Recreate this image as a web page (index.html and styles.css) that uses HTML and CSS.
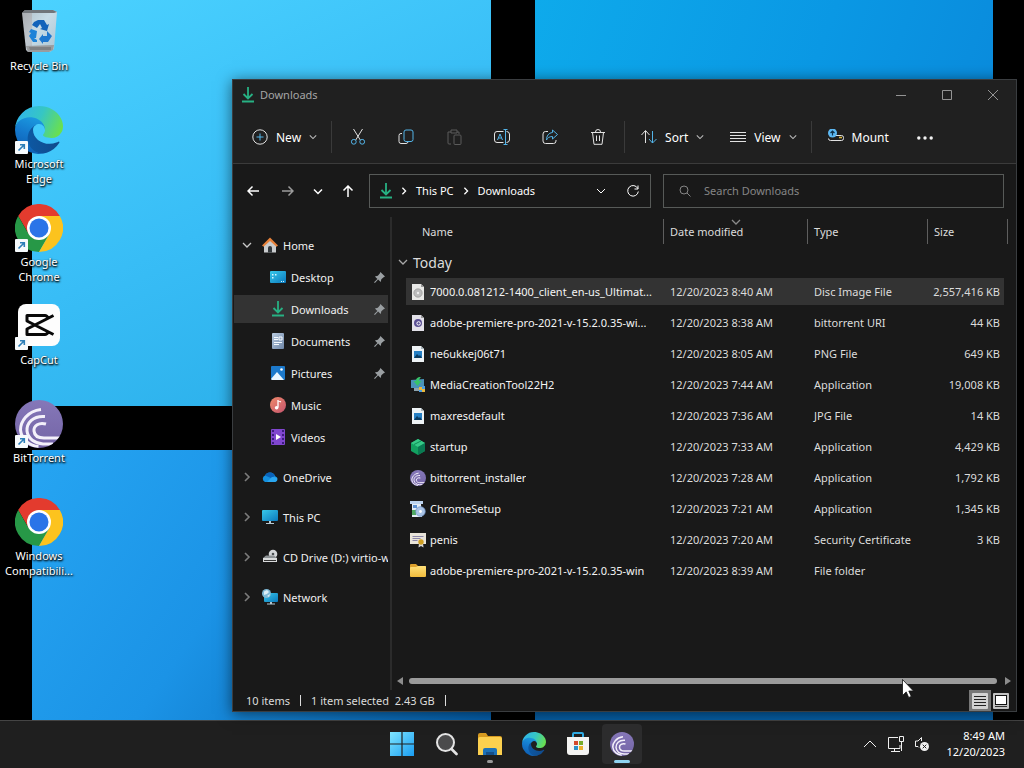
FILE: index.html
```html
<!DOCTYPE html>
<html lang="en">

<head>
  <meta charset="UTF-8">
  <meta name="viewport" content="width=device-width, initial-scale=1">
  <title>Downloads</title>
  <link rel="stylesheet" href="styles.css">
</head>

<body>
  <!-- shared icons -->
  <svg class="sprite" aria-hidden="true">
    <defs>
      <linearGradient id="edgeA" x1="0" y1="0.5" x2="1" y2="0.5"><stop offset="0" stop-color="#0c59a4"/><stop offset="1" stop-color="#114a8b"/></linearGradient>
      <linearGradient id="edgeB" x1="0.6" y1="0" x2="0.3" y2="1"><stop offset="0" stop-color="#1b9de2"/><stop offset="0.5" stop-color="#1478cc"/><stop offset="1" stop-color="#0d5cb0"/></linearGradient>
      <linearGradient id="edgeC" x1="0" y1="0.3" x2="1" y2="0.6"><stop offset="0" stop-color="#2fb4ec"/><stop offset="0.5" stop-color="#36c6c4"/><stop offset="1" stop-color="#6be04c"/></linearGradient>
      <linearGradient id="bin" x1="0" y1="0" x2="1" y2="1"><stop offset="0" stop-color="#b9bdc2"/><stop offset="0.45" stop-color="#d5dde4"/><stop offset="1" stop-color="#b4c3cf"/></linearGradient>
      <linearGradient id="bt" x1="0" y1="0" x2="0" y2="1"><stop offset="0" stop-color="#8577b8"/><stop offset="1" stop-color="#7465a6"/></linearGradient>
      <linearGradient id="screen" x1="0" y1="0" x2="1" y2="1"><stop offset="0" stop-color="#38c8ea"/><stop offset="1" stop-color="#0b79bd"/></linearGradient>
      <linearGradient id="folder" x1="0" y1="0" x2="0" y2="1"><stop offset="0" stop-color="#ffe07a"/><stop offset="1" stop-color="#f2bc3c"/></linearGradient>
      <linearGradient id="win" x1="0" y1="0" x2="1" y2="1"><stop offset="0" stop-color="#7fe6ff"/><stop offset="1" stop-color="#1a9df2"/></linearGradient>
      <linearGradient id="paper" x1="0" y1="0" x2="1" y2="1"><stop offset="0" stop-color="#b9cbe0"/><stop offset="1" stop-color="#6f87a8"/></linearGradient>
      <linearGradient id="tune" x1="0" y1="0" x2="1" y2="1"><stop offset="0" stop-color="#f08a6a"/><stop offset="1" stop-color="#c4546e"/></linearGradient>
      <clipPath id="disc"><circle cx="24" cy="24" r="24"/></clipPath>
    </defs>

    <symbol id="i-bin" viewBox="0 0 48 48">
      <path d="M7 5 10 2h28l4 2-3 37-4 3H13l-2-2z" fill="url(#bin)" fill-opacity=".9"/>
      <path d="M7 5 10 2h28l4 2-3 1z" fill="#70757a"/>
      <path d="m11 38 28-1-1 5-4 2H13z" fill="#9a9c9e"/>
      <path d="M14 39h22v3H15z" fill="#7f8183"/>
      <path d="m19 14 4-2h6l3 5 2-1-2 7-7-2 2-1-2-4-3 4-5-3z" fill="#1263ba"/>
      <path d="m16 21 6 2-1 7h-2l3 2v2h-4l-4-6 2-3-2-1z" fill="#1d83d8"/>
      <path d="m32 23 5 5-4 6h-5v2l-4-5 4-5v2h4z" fill="#1e78cf"/>
    </symbol>
    <symbol id="i-edge" viewBox="0 0 256 256">
      <g transform="translate(-4.63 -4.92)">
        <path d="M235.68 195.46a93.73 93.73 0 0 1-10.54 4.71 101.87 101.87 0 0 1-35.9 6.46c-47.32 0-88.54-32.55-88.54-74.32A31.48 31.48 0 0 1 117.13 105c-42.8 1.8-53.8 46.4-53.8 72.53 0 73.88 68.09 81.37 82.76 81.37 7.91 0 19.84-2.3 27-4.56l1.31-.44a128.34 128.34 0 0 0 66.6-52.8 4 4 0 0 0-5.32-5.64z" fill="url(#edgeA)"/>
        <path d="M110.34 246.34A79.2 79.2 0 0 1 87.6 225a80.72 80.72 0 0 1 29.53-120c3.12-1.47 8.45-4.13 15.54-4a32.35 32.35 0 0 1 25.69 13 31.88 31.88 0 0 1 6.36 18.66c0-.21 24.46-79.6-80-79.6-43.9 0-80 41.66-80 78.21a130.15 130.15 0 0 0 12.11 56 128 128 0 0 0 156.38 67.11 75.55 75.55 0 0 1-62.78-8z" fill="url(#edgeB)"/>
        <path d="M156.94 153.78c-.81 1.05-3.3 2.5-3.3 5.66 0 2.61 1.7 5.12 4.72 7.23 14.38 10 41.49 8.68 41.56 8.68a59.56 59.56 0 0 0 30.27-8.35 61.38 61.38 0 0 0 30.43-52.88c.26-22.41-8-37.31-11.34-43.91C228.09 28.76 182.35 4.92 132.61 4.92a128 128 0 0 0-128 126.2c.48-36.54 36.8-66.05 80-66.05 3.5 0 23.46.34 42 10.07 16.34 8.58 24.9 18.94 30.85 29.21 6.18 10.67 7.28 24.15 7.28 29.52s-2.74 13.33-7.8 19.91z" fill="url(#edgeC)"/>
      </g>
    </symbol>
    <symbol id="i-chrome" viewBox="0 0 48 48">
      <path d="M44.8 12A24 24 0 0 0 3.2 12l10.4 18L24 12z" fill="#e33b2e"/>
      <path d="M3.2 12A24 24 0 0 0 24 48l10.4-18H13.6z" fill="#279847"/>
      <path d="M24 48a24 24 0 0 0 20.8-36H24l10.4 18z" fill="#fcc31e"/>
      <circle cx="24" cy="24" r="12" fill="#fff"/>
      <circle cx="24" cy="24" r="9.5" fill="#2a74e8"/>
    </symbol>
    <symbol id="i-capcut" viewBox="0 0 48 48">
      <rect x="3" y="2" width="42" height="42" rx="8" fill="#fdfdfd"/>
      <path d="M38.500 13.500 12 27v5.500h18q2 0 3.500-3M38.500 32.500 12 19v-5.500h18q2 0 3.500 3" fill="none" stroke="#080808" stroke-width="3" stroke-linejoin="round"/>
    </symbol>
    <symbol id="i-bt" viewBox="0 0 48 48">
      <circle cx="24" cy="24" r="24" fill="url(#bt)"/>
      <g clip-path="url(#disc)" fill="none" stroke="#f3f0fa" stroke-width="3">
        <path d="M26 9.500C12 11 5.500 22 5.500 30c1 10 10 16 18 16.500"/>
        <path d="M30 16.500C18 15.500 11.500 23 12 31c1 8 8 12.500 16 13h10"/>
        <path d="M31 24c-7-2-12.500 1.500-12 7 .5 5 5 7 10 7h17"/>
      </g>
    </symbol>
    <symbol id="i-shortcut" viewBox="0 0 13 13">
      <rect width="13" height="13" rx="1" fill="#f6fafc"/>
      <path d="M3.500 9.500 9 4M5 3.700h4.300V8" fill="none" stroke="#2d7fb8" stroke-width="1.600"/>
    </symbol>
    <symbol id="i-download" viewBox="0 0 12 16">
      <path d="M6 0v11M1.500 7 6 11.500 10.500 7" fill="none" stroke="#27b183" stroke-width="1.800"/>
      <path d="M0 14.500h12" stroke="#27b183" stroke-width="2"/>
    </symbol>
    <symbol id="i-down" viewBox="0 0 10 10"><path d="m1 3 4 4 4-4" fill="none" stroke="currentColor" stroke-width="1.300"/></symbol>
    <symbol id="i-right" viewBox="0 0 10 10"><path d="m3 1 4 4-4 4" fill="none" stroke="currentColor" stroke-width="1.600"/></symbol>
    <symbol id="i-pin" viewBox="0 0 12 12">
      <path d="m7 0 5 5-1.500.8L8 8l-.7 3L4.500 8.200 1 12l-1-.7 3.700-3.600L1 4.900l3.200-.7L6.300 1.500z" fill="#9a9fa2"/>
    </symbol>
    <symbol id="i-image" viewBox="0 0 16 16">
      <path d="M2 0h9l3 3v13H2z" fill="#eef3f5"/><path d="M11 0v3h3z" fill="#aab5bb"/>
      <path d="M4 5h8v7H4z" fill="#2780c4"/><path d="m4 12 3-4 2 2 1-1 2 3z" fill="#0b3d63"/>
    </symbol>
    <symbol id="i-folder" viewBox="0 0 16 16">
      <path d="M0 2q0-1 1-1h5l2 2h7q1 0 1 1v3H0z" fill="#dca02c"/>
      <path d="M0 5q0-1 1-1h5l2-1h7q1 0 1 1v9q0 1-1 1H1q-1 0-1-1z" fill="url(#folder)"/>
    </symbol>
    <symbol id="i-pc" viewBox="0 0 16 16">
      <rect y="1" width="16" height="11" rx="1" fill="url(#screen)"/>
      <path d="M7 12h2v2h3v1H4v-1h3z" fill="#b5c8d2"/>
    </symbol>
  </svg>

  <main class="desktop">
    <div class="wallpaper" aria-hidden="true">
      <div class="pane pane-1"></div>
      <div class="pane pane-2"></div>
      <div class="pane pane-3"></div>
      <div class="pane pane-4"></div>
    </div>

    <nav class="shortcuts" aria-label="Desktop">
      <a href="#" class="shortcut">
        <span class="shortcut-icon"><svg><use href="#i-bin"/></svg></span>
        Recycle Bin
      </a>
      <a href="#" class="shortcut">
        <span class="shortcut-icon"><svg><use href="#i-edge"/></svg><svg class="badge"><use href="#i-shortcut"/></svg></span>
        Microsoft Edge
      </a>
      <a href="#" class="shortcut">
        <span class="shortcut-icon"><svg><use href="#i-chrome"/></svg><svg class="badge"><use href="#i-shortcut"/></svg></span>
        Google Chrome
      </a>
      <a href="#" class="shortcut">
        <span class="shortcut-icon"><svg><use href="#i-capcut"/></svg><svg class="badge"><use href="#i-shortcut"/></svg></span>
        CapCut
      </a>
      <a href="#" class="shortcut">
        <span class="shortcut-icon"><svg><use href="#i-bt"/></svg><svg class="badge"><use href="#i-shortcut"/></svg></span>
        BitTorrent
      </a>
      <a href="#" class="shortcut">
        <span class="shortcut-icon"><svg><use href="#i-chrome"/></svg></span>
        Windows Compatibili...
      </a>
    </nav>

    <section class="window" aria-label="File Explorer">
      <header class="titlebar">
        <svg class="title-icon"><use href="#i-download"/></svg>
        <h1>Downloads</h1>
        <button type="button" class="win-btn" aria-label="Minimize"><svg viewBox="0 0 12 12"><path d="M1 6.500h10"/></svg></button>
        <button type="button" class="win-btn" aria-label="Maximize"><svg viewBox="0 0 12 12"><path d="M1.500 1.500h9v9h-9z"/></svg></button>
        <button type="button" class="win-btn" aria-label="Close"><svg viewBox="0 0 12 12"><path d="m1 1 10 10M11 1 1 11"/></svg></button>
      </header>

      <div class="toolbar">
        <button type="button" class="tool">
          <svg class="ico" viewBox="0 0 16 16"><circle cx="8" cy="8" r="7.200" class="w"/><path class="b" d="M8 4.500v7M4.500 8h7"/></svg>
          New
          <svg class="chev"><use href="#i-down"/></svg>
        </button>
        <span class="sep"></span>
        <button type="button" class="tool-icon" aria-label="Cut"><svg class="ico" viewBox="0 0 16 16"><path class="w" d="m3.500 0 6.800 11M12.500 0 5.700 11"/><circle class="b" cx="3.800" cy="12.800" r="2.400"/><circle class="b" cx="12.200" cy="12.800" r="2.400"/></svg></button>
        <button type="button" class="tool-icon" aria-label="Copy"><svg class="ico" viewBox="0 0 16 16"><path class="w" d="M4 4.500H3a2 2 0 0 0-2 2v6a2 2 0 0 0 2 2h5a2 2 0 0 0 2-1.500"/><rect class="b" x="6" y="1" width="9" height="11.500" rx="2"/></svg></button>
        <button type="button" class="tool-icon" aria-label="Paste" disabled><svg class="ico" viewBox="0 0 16 16"><path class="w" d="M5 15H3a1 1 0 0 1-1-1V3h3M11 3h2v2M5 1h6v3H5z"/><rect class="w" x="8" y="6" width="7" height="9.500" rx="1"/></svg></button>
        <button type="button" class="tool-icon" aria-label="Rename"><svg class="ico" viewBox="0 0 16 16"><path class="w" d="M9.500 2.500H3a2.500 2.500 0 0 0-2.500 2.500v6A2.500 2.500 0 0 0 3 13.500h6.500M12.500 2.500a3 3 0 0 1 3 2.500v6a3 3 0 0 1-3 2.500"/><path class="b" d="M3.500 11 6 5l2.500 6M4.300 9h3.400M11.500 .5v15M9.500.5h4M9.500 15.500h4"/></svg></button>
        <button type="button" class="tool-icon" aria-label="Share"><svg class="ico" viewBox="0 0 16 16"><path class="w" d="M6 2.500H3.500a2.500 2.500 0 0 0-2.500 2.500v7a2.500 2.500 0 0 0 2.500 2.500h8a2.500 2.500 0 0 0 2.500-2.500V11"/><path class="b" d="m10.500 1 5 4.500-5 4.500V7.500C7 7.500 5.500 9 4.500 11c0-4 2-7 6-7.500z"/></svg></button>
        <button type="button" class="tool-icon" aria-label="Delete"><svg class="ico" viewBox="0 0 16 16"><path class="w" d="M1 3.500h14M5.500 3a2.500 2.500 0 0 1 5 0M2.500 3.500 4 15.300h8l1.500-11.800M6.500 6.500v5.500M9.500 6.500v5.500"/></svg></button>
        <span class="sep"></span>
        <button type="button" class="tool">
          <svg class="ico" viewBox="0 0 16 16"><path class="w" d="M4.500 14V2M0.500 6l4-4.500L8.500 6"/><path class="b" d="M11.500 2v12M8 10l3.500 4 4-4"/></svg>
          Sort
          <svg class="chev"><use href="#i-down"/></svg>
        </button>
        <button type="button" class="tool">
          <svg class="ico" viewBox="0 0 16 16"><path class="w" d="M0 3.500h16M0 6.500h16M0 9.500h16M0 12.500h16"/></svg>
          View
          <svg class="chev"><use href="#i-down"/></svg>
        </button>
        <span class="sep"></span>
        <button type="button" class="tool">
          <svg class="ico" viewBox="0 0 16 16"><path class="w" d="M8 6.500h5.500a2 2 0 0 1 2 2v1a2 2 0 0 1-2 2h-11a2 2 0 0 1-2-2"/><path d="M11 8.500h3" stroke="#d9b53a" stroke-width="1.500"/><circle cx="4.500" cy="4" r="4.500" fill="#5cb8f2"/><path d="M4.500 6.500V2M2.500 4l2-2 2 2" fill="none" stroke="#10324a" stroke-width="1.200"/></svg>
          Mount
        </button>
        <button type="button" class="tool-icon" aria-label="See more"><svg class="ico" viewBox="0 0 16 16"><g fill="#f2f2f2"><circle cx="1.800" cy="9" r="1.700"/><circle cx="8" cy="9" r="1.700"/><circle cx="14.200" cy="9" r="1.700"/></g></svg></button>
      </div>

      <div class="navbar">
        <button type="button" class="nav-btn" aria-label="Back"><svg viewBox="0 0 12 12"><path d="M12 6H1M5.500 1.500 1 6l4.500 4.500"/></svg></button>
        <button type="button" class="nav-btn dim" aria-label="Forward"><svg viewBox="0 0 12 12"><path d="M0 6h11M6.500 1.500 11 6l-4.500 4.500"/></svg></button>
        <button type="button" class="nav-btn narrow" aria-label="Recent locations"><svg viewBox="0 0 12 12"><path d="m2 4.500 4 4 4-4"/></svg></button>
        <button type="button" class="nav-btn" aria-label="Up"><svg viewBox="0 0 12 12"><path d="M6 12V1M1.500 5.500 6 1l4.500 4.500"/></svg></button>
        <div class="address">
          <svg class="address-icon"><use href="#i-download"/></svg>
          <svg class="crumb-sep"><use href="#i-right"/></svg>
          <a href="#">This PC</a>
          <svg class="crumb-sep"><use href="#i-right"/></svg>
          <a href="#">Downloads</a>
          <button type="button" class="address-btn" aria-label="Previous locations"><svg viewBox="0 0 12 12"><path d="m2 4 4 4 4-4"/></svg></button>
          <button type="button" class="address-btn" aria-label="Refresh"><svg viewBox="0 0 12 12"><path d="M10.800 3.500A5.300 5.300 0 1 0 11.300 6.500M11 .5v3.500H7.500"/></svg></button>
        </div>
        <div class="search">
          <svg viewBox="0 0 12 12"><circle cx="5" cy="5" r="4"/><path d="m8 8 3.500 3.500"/></svg>
          <input type="search" aria-label="Search Downloads" placeholder="Search Downloads">
        </div>
      </div>

      <div class="content">
        <nav class="sidebar" aria-label="Folders">
          <a href="#" class="node">
            <svg class="twist open"><use href="#i-down"/></svg>
            <svg class="file-icon" viewBox="0 0 16 16"><path d="M2 8 8 2l6 6v7.500H2z" fill="#c9ccce"/><path d="M6 15.500V11a2 2 0 0 1 4 0v4.500z" fill="#33383c"/><path d="m0 8.500 8-8 8 8-1.500 1.200L8 4 1.500 9.700z" fill="#e8823a"/></svg>
            <span>Home</span>
          </a>
          <a href="#" class="node child">
            <svg class="file-icon" viewBox="0 0 16 16"><rect y="2" width="16" height="12" rx="1" fill="url(#screen)"/><path d="M2 5h1.500v1.500H2zM2 8h1.500v1.500H2zM5 5h1.500v1.500H5zM11 12h1v1h-1zM13 12h1v1h-1z" fill="#d8f6ff"/></svg>
            <span>Desktop</span>
            <svg class="pin"><use href="#i-pin"/></svg>
          </a>
          <a href="#" class="node child active">
            <svg class="file-icon"><use href="#i-download"/></svg>
            <span>Downloads</span>
            <svg class="pin"><use href="#i-pin"/></svg>
          </a>
          <a href="#" class="node child">
            <svg class="file-icon" viewBox="0 0 16 16"><rect x="2" width="12" height="16" rx="1" fill="url(#paper)"/><path d="M4 4.500h4M4 6.500h4M9 4h3v3H9zM4 9.500h8M4 11.500h5" stroke="#f5faff" fill="none"/></svg>
            <span>Documents</span>
            <svg class="pin"><use href="#i-pin"/></svg>
          </a>
          <a href="#" class="node child">
            <svg class="file-icon" viewBox="0 0 16 16"><rect x="1" y="1" width="14" height="14" rx="1" fill="#1c79cb"/><path d="m1 14 6-7 7 8H2z" fill="#e9f6ff"/><circle cx="11.500" cy="4.500" r="1.300" fill="#fff"/></svg>
            <span>Pictures</span>
            <svg class="pin"><use href="#i-pin"/></svg>
          </a>
          <a href="#" class="node child">
            <svg class="file-icon" viewBox="0 0 16 16"><circle cx="8" cy="8" r="8" fill="url(#tune)"/><path d="M8 3v7.500M8 3.500l3 1.500" stroke="#fff" stroke-width="1.300" fill="none"/><circle cx="6.600" cy="10.800" r="1.800" fill="#fff"/></svg>
            <span>Music</span>
          </a>
          <a href="#" class="node child">
            <svg class="file-icon" viewBox="0 0 16 16"><rect x="1" width="14" height="16" rx="1" fill="#8046cf"/><path d="M3 1v14M13 1v14" stroke="#3d1c80" stroke-width="2" stroke-dasharray="2 2"/><path d="m6 5 5 3-5 3z" fill="#fff"/></svg>
            <span>Videos</span>
          </a>
          <a href="#" class="node root">
            <svg class="twist"><use href="#i-right"/></svg>
            <svg class="file-icon" viewBox="0 0 16 16"><path d="M3 13a3.500 3.500 0 0 1 0-6.500A5.500 5.500 0 0 1 13 7a3.200 3.200 0 0 1 0 6z" fill="#1490df"/><path d="M3 6.500A5.500 5.500 0 0 1 13 7l-4 2z" fill="#0a62b8"/><path d="m5 13 5-5 5 .5A3 3 0 0 1 13 13z" fill="#2aa6ef"/></svg>
            <span>OneDrive</span>
          </a>
          <a href="#" class="node root">
            <svg class="twist"><use href="#i-right"/></svg>
            <svg class="file-icon"><use href="#i-pc"/></svg>
            <span>This PC</span>
          </a>
          <a href="#" class="node root">
            <svg class="twist"><use href="#i-right"/></svg>
            <svg class="file-icon" viewBox="0 0 16 16"><circle cx="11" cy="5" r="4.300" fill="#d3d6d8"/><circle cx="11" cy="5" r="1.300" fill="#4a4f52"/><path d="m1 9 3-2.500h8L15 9v4H1z" fill="#8d9295"/><path d="M1 9h14v4H1z" fill="#d9dbdc"/><path d="M2 11.500h12" stroke="#333"/></svg>
            <span>CD Drive (D:) virtio-win</span>
          </a>
          <a href="#" class="node root">
            <svg class="twist"><use href="#i-right"/></svg>
            <svg class="file-icon" viewBox="0 0 16 16"><rect x="2" y="4" width="14" height="9" rx="1" fill="url(#screen)"/><path d="M8 13h2v1.500h3v1H5v-1h3z" fill="#b5c8d2"/><circle cx="4.500" cy="4.500" r="4.500" fill="#7fb9d6"/><path d="M2 2.500 5 1l2 2-2 2-3 1zM5 7l3-2-1 3z" fill="#dbeef7"/></svg>
            <span>Network</span>
          </a>
        </nav>

        <div class="files">
          <div class="table-wrap">
            <table>
              <colgroup>
                <col>
                <col class="col-date">
                <col class="col-type">
                <col class="col-size">
              </colgroup>
              <thead>
                <tr>
                  <th scope="col">Name</th>
                  <th scope="col" aria-sort="descending">Date modified<svg class="sort-mark"><use href="#i-down"/></svg></th>
                  <th scope="col">Type</th>
                  <th scope="col">Size</th>
                </tr>
              </thead>
              <tbody>
                <tr class="group">
                  <td colspan="4"><button type="button" aria-expanded="true"><svg><use href="#i-down"/></svg>Today</button></td>
                </tr>
                <tr class="selected">
                  <td><div class="file"><svg viewBox="0 0 16 16"><path d="M2 0h9l3 3v13H2z" fill="#e9e9e7"/><path d="M11 0v3h3z" fill="#999"/><circle cx="8" cy="9" r="4.200" fill="#bdbdbd" stroke="#8b8b8b" stroke-width=".6"/><circle cx="8" cy="9" r="1.200" fill="#eee"/></svg><span>7000.0.081212-1400_client_en-us_Ultimat...</span></div></td>
                  <td>12/20/2023 8:40 AM</td>
                  <td>Disc Image File</td>
                  <td>2,557,416 KB</td>
                </tr>
                <tr>
                  <td><div class="file"><svg viewBox="0 0 16 16"><path d="M2 0h9l3 3v13H2z" fill="#e2e0e8"/><path d="M11 0v3h3z" fill="#999"/><circle cx="8" cy="8" r="4" fill="#5a4f93"/><circle cx="8.600" cy="8.400" r="1.700" fill="none" stroke="#fff"/></svg><span>adobe-premiere-pro-2021-v-15.2.0.35-wi...</span></div></td>
                  <td>12/20/2023 8:38 AM</td>
                  <td>bittorrent URI</td>
                  <td>44 KB</td>
                </tr>
                <tr>
                  <td><div class="file"><svg><use href="#i-image"/></svg><span>ne6ukkej06t71</span></div></td>
                  <td>12/20/2023 8:05 AM</td>
                  <td>PNG File</td>
                  <td>649 KB</td>
                </tr>
                <tr>
                  <td><div class="file"><svg viewBox="0 0 16 16"><path d="m1 3 13-1v9L1 11z" fill="#4a93b8"/><path d="M4 11h6v3H4z" fill="#8da3ad"/><path d="M11 0c-4 0-5 2-5 4H3.500l4 5 4-5H9c0-2 1-3 2-4z" fill="#37c46a"/><path d="M9 10h3v3H9zM12 12h3v3h-3z" fill="#eab93c"/><path d="M12 9h3v3h-3zM9 13h3v2H9z" fill="#4d9ee0"/></svg><span>MediaCreationTool22H2</span></div></td>
                  <td>12/20/2023 7:44 AM</td>
                  <td>Application</td>
                  <td>19,008 KB</td>
                </tr>
                <tr>
                  <td><div class="file"><svg><use href="#i-image"/></svg><span>maxresdefault</span></div></td>
                  <td>12/20/2023 7:36 AM</td>
                  <td>JPG File</td>
                  <td>14 KB</td>
                </tr>
                <tr>
                  <td><div class="file"><svg viewBox="0 0 16 16"><path d="m8 0 7 4v8l-7 4-7-4V4z" fill="#12a060"/><path d="m8 0 7 4-7 4-7-4z" fill="#36c987"/><path d="m8 8 7-4v8l-7 4z" fill="#0a7a52"/><path d="m4 5.500 7-3.500" stroke="#0e8b56"/></svg><span>startup</span></div></td>
                  <td>12/20/2023 7:33 AM</td>
                  <td>Application</td>
                  <td>4,429 KB</td>
                </tr>
                <tr>
                  <td><div class="file"><svg><use href="#i-bt"/></svg><span>bittorrent_installer</span></div></td>
                  <td>12/20/2023 7:28 AM</td>
                  <td>Application</td>
                  <td>1,792 KB</td>
                </tr>
                <tr>
                  <td><div class="file"><svg viewBox="0 0 16 16"><path d="M0 0h13v3H0z" fill="#bcd3ee"/><path d="M2 3h9l1 13H2z" fill="#e4edf7"/><path d="M3 4h4v3H3z" fill="#5b8fd0"/><path d="M2 9h4v5H2z" fill="#4fa861"/><circle cx="10.500" cy="10.500" r="4.800" fill="#a9c3e6" stroke="#6c8fc4" stroke-width=".7"/><circle cx="10.500" cy="10.500" r="1.400" fill="#fff"/></svg><span>ChromeSetup</span></div></td>
                  <td>12/20/2023 7:21 AM</td>
                  <td>Application</td>
                  <td>1,345 KB</td>
                </tr>
                <tr>
                  <td><div class="file"><svg viewBox="0 0 16 16"><rect y="1" width="16" height="11" fill="#e9e4da"/><path d="M2.500 4.500h11M2.500 6.500h8M2.500 8.500h5" stroke="#8b86a8"/><path d="m9 11-.5 4.500L11 14l2.500 1.500L13 11z" fill="#d8d8d8"/><circle cx="11" cy="10" r="2.700" fill="#cf9f22"/></svg><span>penis</span></div></td>
                  <td>12/20/2023 7:20 AM</td>
                  <td>Security Certificate</td>
                  <td>3 KB</td>
                </tr>
                <tr>
                  <td><div class="file"><svg><use href="#i-folder"/></svg><span>adobe-premiere-pro-2021-v-15.2.0.35-win</span></div></td>
                  <td>12/20/2023 8:39 AM</td>
                  <td>File folder</td>
                  <td></td>
                </tr>
              </tbody>
            </table>
          </div>
          <div class="scrollbar">
            <svg viewBox="0 0 8 10"><path d="M7 1v8L1 5z"/></svg>
            <span class="thumb"></span>
            <svg viewBox="0 0 8 10"><path d="M1 1v8l6-4z"/></svg>
          </div>
        </div>
      </div>

      <footer class="status">
        <span>10 items</span>
        <i></i>
        <span>1 item selected&nbsp; 2.43 GB</span>
        <i></i>
        <div class="view-modes">
          <button type="button" class="on" aria-label="Details view"><svg viewBox="0 0 16 16"><rect width="16" height="16" rx="1" fill="#d2d2d2"/><path d="M2 3.500h12M2 6.500h12M2 9.500h12M2 12.500h12" stroke="#222"/></svg></button>
          <button type="button" aria-label="Large icons view"><svg viewBox="0 0 16 16"><rect width="16" height="16" rx="1" fill="#c2c2c2"/><rect x="2.500" y="2.500" width="11" height="9" fill="#fff" stroke="#111"/><path d="M2 13.500h12" stroke="#333"/></svg></button>
        </div>
      </footer>
    </section>
  </main>

  <footer class="taskbar">
    <div class="apps">
      <button type="button" aria-label="Start"><svg viewBox="0 0 24 24"><path d="M0 0h11.400v11.400H0zM12.600 0H24v11.400H12.600zM0 12.600h11.400V24H0zM12.600 12.600H24V24H12.600z" fill="url(#win)"/></svg></button>
      <button type="button" aria-label="Search"><svg viewBox="0 0 24 24"><circle cx="11.500" cy="10.500" r="8.500" fill="#4b4b4c" stroke="#e4e4e4" stroke-width="2"/><path d="m17.500 17 5 5" stroke="#e4e4e4" stroke-width="2.600" stroke-linecap="round"/></svg></button>
      <button type="button" class="running" aria-label="File Explorer"><svg viewBox="0 0 24 24"><path d="M0 3q0-2 2-2h6l2 3h12q2 0 2 2v6H0z" fill="#d69a20"/><path d="M0 7q0-2 2-2h20q2 0 2 2v16H0z" fill="#fcd04f"/><path d="M5 23v-5q0-2 2-2h10q2 0 2 2v5z" fill="#1d71b8"/><path d="M8 20h8v3H8z" fill="#164f8a"/></svg></button>
      <button type="button" aria-label="Microsoft Edge"><svg><use href="#i-edge"/></svg></button>
      <button type="button" aria-label="Microsoft Store"><svg viewBox="0 0 24 24"><path d="M7 6V2q0-1 1-1h8q1 0 1 1v4" fill="none" stroke="#2eaae2" stroke-width="2"/><path d="M1 5h22v15q0 3-3 3H4q-3 0-3-3z" fill="#f4f4f2"/><path d="M8 9h4v4H8z" fill="#d3492c"/><path d="M13 9h4v4h-4z" fill="#76ac2a"/><path d="M8 14h4v4H8z" fill="#2a90c8"/><path d="M13 14h4v4h-4z" fill="#eab02c"/></svg></button>
      <button type="button" class="running current" aria-label="BitTorrent"><svg><use href="#i-bt"/></svg></button>
    </div>
    <div class="tray">
      <button type="button" aria-label="Show hidden icons"><svg viewBox="0 0 16 16"><path d="m2 11 6-6 6 6"/></svg></button>
      <button type="button" aria-label="Network"><svg viewBox="0 0 16 16"><path d="M10 1.500H.5v11H12V9M3 15.500h9M6.500 12.500v3M11.500 .5h4v5h-4zM13.500 5.500V15"/></svg></button>
      <button type="button" aria-label="Volume muted"><svg viewBox="0 0 16 16"><path d="M7.500 5V1.500L4 5H1.500v5.500H4l1 1"/><circle cx="10.500" cy="10.500" r="4.500" fill="#f0f0f0" stroke="none"/><path d="m8.700 8.700 3.600 3.600M12.300 8.700l-3.600 3.600" class="x"/></svg></button>
      <time datetime="2023-12-20T08:49">8:49 AM<br>12/20/2023</time>
    </div>
  </footer>

  <svg class="cursor" viewBox="0 0 12 19" aria-hidden="true"><path d="M.5.500v16l3.700-3.600 2.500 5.600 2.600-1.100-2.500-5.400h4.700z" fill="#fff" stroke="#111" stroke-width=".8"/></svg>
</body>

</html>
```
FILE: styles.css
```css
* {
  box-sizing: border-box;
}

html,
body {
  height: 100%;
  margin: 0;
}

body {
  display: flex;
  flex-direction: column;
  overflow: hidden;
  background: #000;
  color: #f0f0f0;
  font: 11px/15px "Noto Sans", "Open Sans", sans-serif;
}

button,
input {
  font: inherit;
  color: inherit;
  background: none;
  border: 0;
  padding: 0;
}

a {
  color: inherit;
  text-decoration: none;
}

svg {
  display: block;
  flex: none;
}

.sprite {
  position: absolute;
  width: 0;
  height: 0;
}

/* desktop */
.desktop {
  flex: 1;
  min-height: 0;
  position: relative;
}

.wallpaper {
  position: absolute;
  inset: 0;
  display: grid;
  grid-template: 3fr 2fr / 1fr 1fr;
  gap: 44px;
  padding: 0 31px 0 32px;
}

.pane-1 {
  background: linear-gradient(155deg, #4bd2ff, #38bdf6 50%, #27abe6);
}

.pane-2 {
  background: linear-gradient(110deg, #0eaaeb, #0a98e4 50%, #0a84d8);
}

.pane-3 {
  background: linear-gradient(125deg, #26a5f2, #1b93e6 45%, #0560ad);
}

.pane-4 {
  background: linear-gradient(#0a78cc, #0560a8);
}

.shortcuts {
  position: relative;
  width: 78px;
  padding-top: 8px;
}

.shortcut {
  display: flex;
  flex-direction: column;
  align-items: center;
  gap: 2px;
  height: 98px;
  padding: 0 3px;
  text-align: center;
  color: #fff;
  text-shadow: 1px 1px 2px #000, 0 1px 2px #000;
}

.shortcut-icon {
  position: relative;
}

.shortcut-icon svg {
  width: 48px;
  height: 48px;
}

.shortcut-icon .badge {
  position: absolute;
  left: 0;
  bottom: 0;
  width: 13px;
  height: 13px;
}

/* explorer window */
.window {
  position: absolute;
  inset: 79px 7px 8px 232px;
  display: flex;
  flex-direction: column;
  background: #191919;
  border: 1px solid #3a3d40;
  box-shadow: 0 2px 14px rgba(0, 0, 0, .55);
}

.titlebar {
  display: flex;
  align-items: center;
  height: 29px;
  padding-left: 9px;
  background: #202020;
  color: #a5a5a5;
}

.title-icon {
  width: 12px;
  height: 16px;
}

.titlebar h1 {
  flex: 1;
  margin: 0 0 0 6px;
  font-size: 11px;
  font-weight: 400;
}

.win-btn {
  width: 46px;
  height: 29px;
  display: grid;
  place-items: center;
  color: #949494;
}

.win-btn svg,
.nav-btn svg,
.address-btn svg,
.search svg {
  width: 12px;
  height: 12px;
  fill: none;
  stroke: currentColor;
}

.toolbar {
  display: flex;
  align-items: center;
  height: 55px;
  padding: 2px 0 0 5px;
  background: #202020;
  border-bottom: 1px solid #3b3b3b;
}

.tool {
  display: flex;
  align-items: center;
  gap: 8px;
  height: 36px;
  padding: 0 12px 0 14px;
  color: #fff;
  font-size: 12px;
}

.tool .chev {
  width: 8px;
  height: 8px;
  color: #bdbdbd;
}

.tool-icon {
  width: 48px;
  height: 36px;
  display: grid;
  place-items: center;
}

.tool-icon:disabled {
  opacity: .3;
}

.ico {
  width: 16px;
  height: 16px;
}

.ico .w {
  fill: none;
  stroke: #e2e2e2;
}

.ico .b {
  fill: none;
  stroke: #53b4e8;
}

.sep {
  width: 1px;
  height: 32px;
  margin: 0 2px;
  background: #3a3a3a;
}

.navbar {
  display: flex;
  align-items: center;
  height: 53px;
  padding: 0 12px 0 2px;
}

.nav-btn {
  width: 35px;
  height: 34px;
  display: grid;
  place-items: center;
  color: #fff;
}

.nav-btn svg {
  stroke-width: 1.5;
}

.nav-btn.dim {
  color: #9c9c9c;
}

.nav-btn.narrow {
  width: 25px;
}

.address,
.search {
  display: flex;
  align-items: center;
  height: 34px;
  border: 1px solid #575a58;
}

.address {
  flex: 5;
  gap: 8px;
  margin-left: 4px;
  padding-left: 10px;
  color: #fff;
}

.address-icon {
  width: 12px;
  height: 16px;
}

.crumb-sep {
  width: 8px;
  height: 8px;
}

.address-btn {
  width: 24px;
  height: 32px;
  display: grid;
  place-items: center;
}

.address-btn:first-of-type {
  margin-left: auto;
}

.address-btn:last-child {
  margin-right: 5px;
}

.search {
  flex: 6;
  gap: 13px;
  margin-left: 12px;
  padding-left: 15px;
  color: #858585;
}

.search input {
  flex: 1;
  min-width: 0;
  outline: none;
}

.search input::placeholder {
  color: #858585;
}

.content {
  flex: 1;
  min-height: 0;
  display: flex;
}

/* folder tree */
.sidebar {
  display: flex;
  flex-direction: column;
  gap: 4px;
  width: 159px;
  padding: 14px 2px 0 1px;
  border-right: 2px solid #2b2b2b;
  overflow: hidden;
}

.node {
  display: flex;
  flex: none;
  align-items: center;
  height: 28px;
  padding: 0 3px 0 8px;
  gap: 5px;
  white-space: nowrap;
  overflow: hidden;
}

.node.child {
  padding-left: 36px;
}

.node.root {
  margin-top: 8px;
}

.node.active {
  background: #333;
}

.twist {
  width: 10px;
  height: 10px;
  margin-right: 5px;
  color: #7c7c7c;
}

.twist.open {
  color: #c8c8c8;
}

.file-icon {
  width: 16px;
  height: 16px;
}

.pin {
  width: 11px;
  height: 11px;
  margin-left: auto;
}

/* file list */
.files {
  flex: 1;
  min-width: 0;
  display: flex;
  flex-direction: column;
}

.table-wrap {
  flex: 1;
  min-height: 0;
  overflow: hidden;
  padding: 0 8px 0 4px;
}

table {
  width: 100%;
  table-layout: fixed;
  border-collapse: separate;
  border-spacing: 0;
  color: #dcdcdc;
}

.col-date {
  width: 144px;
}

.col-type {
  width: 120px;
}

.col-size {
  width: 80px;
}

th {
  position: relative;
  height: 29px;
  padding: 0 6px;
  text-align: left;
  font-weight: 400;
  background: linear-gradient(#5e5e5e, #5e5e5e) right center / 1px 25px no-repeat;
}

th:first-child {
  padding-left: 26px;
}

.sort-mark {
  position: absolute;
  top: 0;
  left: calc(50% - 5px);
  width: 10px;
  height: 10px;
  color: #8a8a8a;
}

td {
  height: 31px;
  padding: 0 6px;
  border: solid transparent;
  border-width: 2px 0;
  background-clip: padding-box;
  white-space: nowrap;
}

td:first-child {
  padding: 0 4px;
  border-left-width: 10px;
}

td:last-child {
  padding: 0 4px;
  border-right-width: 4px;
  text-align: right;
}

.selected td {
  background-color: #333;
}

.group td:first-child {
  height: 30px;
  padding: 2px 2px 0;
  border: 0;
  text-align: left;
}

.group button {
  display: flex;
  align-items: center;
  gap: 5px;
  font-size: 14px;
}

.group svg {
  width: 10px;
  height: 10px;
  color: #a8a8a8;
}

.file {
  display: flex;
  align-items: center;
  gap: 4px;
  color: #f4f4f4;
}

.file svg {
  width: 16px;
  height: 16px;
}

.file span {
  overflow: hidden;
  text-overflow: ellipsis;
}

.scrollbar {
  display: flex;
  align-items: center;
  gap: 5px;
  height: 18px;
  padding: 0 4px;
}

.scrollbar svg {
  width: 8px;
  height: 10px;
  fill: #8d8d8d;
}

.thumb {
  flex: 1;
  height: 6px;
  margin-right: 2px;
  border-radius: 3px;
  background: #9b9b9b;
}

.status {
  display: flex;
  align-items: center;
  gap: 10px;
  height: 21px;
  padding: 0 5px 0 13px;
  color: #dcdcdc;
}

.status i {
  width: 1px;
  height: 11px;
  background: #dcdcdc;
}

.view-modes {
  display: flex;
  margin-left: auto;
}

.view-modes button {
  display: grid;
  place-items: center;
  width: 20px;
  height: 21px;
}

.view-modes .on {
  width: 22px;
  background: #777;
}

.view-modes svg {
  width: 16px;
  height: 16px;
}

/* taskbar */
.taskbar {
  display: grid;
  grid-template-columns: 1fr auto 1fr;
  align-items: center;
  height: 48px;
  padding-bottom: 1px;
  background: #1f1f1f;
  border-top: 1px solid #444;
}

.apps {
  grid-column: 2;
  display: flex;
  gap: 4px;
}

.apps button {
  position: relative;
  width: 40px;
  height: 40px;
  display: grid;
  place-items: center;
  border-radius: 4px;
}

.apps svg {
  width: 24px;
  height: 24px;
}

.apps .current {
  background: #2c2c2d;
}

.apps .running::after {
  content: "";
  position: absolute;
  bottom: 1px;
  left: 17px;
  width: 6px;
  height: 3px;
  border-radius: 2px;
  background: #9a9a9a;
}

.apps .current::after {
  left: 12px;
  width: 16px;
  background: #8fd3f0;
}

.tray {
  display: flex;
  align-items: center;
  justify-content: flex-end;
  gap: 10px;
  padding-right: 19px;
  color: #fff;
}

.tray svg {
  width: 16px;
  height: 16px;
  fill: none;
  stroke: #f0f0f0;
}

.tray .x {
  stroke: #1f1f1f;
}

.tray time {
  margin-left: 6px;
  line-height: 16px;
  text-align: right;
}

.cursor {
  position: absolute;
  left: 902px;
  top: 679px;
  width: 12px;
  height: 19px;
}
```
